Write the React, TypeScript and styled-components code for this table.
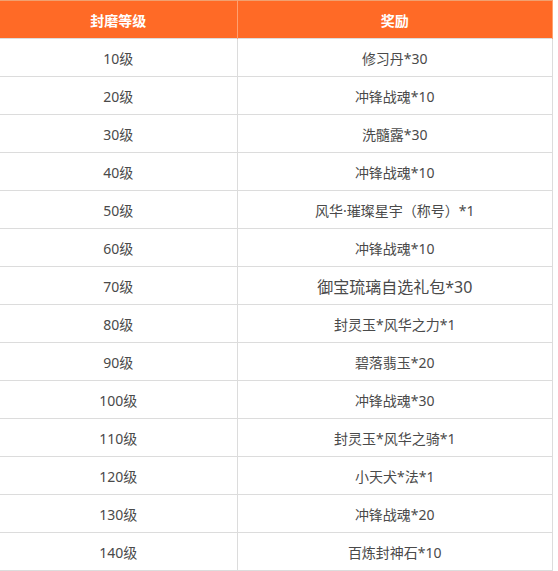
import styled, { createGlobalStyle } from 'styled-components';

const rows: [string, string, boolean?][] = [
  ['10级', '修习丹*30'],
  ['20级', '冲锋战魂*10'],
  ['30级', '洗髓露*30'],
  ['40级', '冲锋战魂*10'],
  ['50级', '风华·璀璨星宇（称号）*1'],
  ['60级', '冲锋战魂*10'],
  ['70级', '御宝琉璃自选礼包*30', true],
  ['80级', '封灵玉*风华之力*1'],
  ['90级', '碧落翡玉*20'],
  ['100级', '冲锋战魂*30'],
  ['110级', '封灵玉*风华之骑*1'],
  ['120级', '小天犬*法*1'],
  ['130级', '冲锋战魂*20'],
  ['140级', '百炼封神石*10'],
];

const GlobalStyle = createGlobalStyle`
  body {
    margin: 0;
    background: #fff;
    font-family: "Noto Sans", "Noto Sans CJK SC", sans-serif;
  }
`;

const App = () => {
  return (
    <>
      <GlobalStyle />
      <Table>
        <colgroup>
          <col style={{ width: 237 }} />
          <col />
        </colgroup>
        <thead>
          <tr>
            <Th>封磨等级</Th>
            <Th>奖励</Th>
          </tr>
        </thead>
        <tbody>
          {rows.map(([level, reward, big]) => (
            <tr key={level}>
              <Td>{level}</Td>
              <Td $big={big}>{reward}</Td>
            </tr>
          ))}
        </tbody>
      </Table>
    </>
  );
};

export default App;

const Table = styled.table`
  width: 553px;
  border-collapse: collapse;
  table-layout: fixed;
`;

const Th = styled.th`
  height: 37px;
  padding: 0;
  background-color: #ff6a26;
  color: #fff;
  font-size: 14px;
  font-weight: 700;
  text-align: center;
  border-top: 1px solid #f0a070;
  border-left: 1px solid #ffa070;
  border-right: 1px solid #ffa070;
  &:first-child {
    border-left: none;
  }
`;

const Td = styled.td<{ $big?: boolean }>`
  height: 37px;
  padding: 0;
  color: #4a4a4a;
  font-size: ${p => (p.$big ? '16px' : '14px')};
  text-align: center;
  border: 1px solid #dcdcdc;
  &:first-child {
    border-left: none;
  }
`;
